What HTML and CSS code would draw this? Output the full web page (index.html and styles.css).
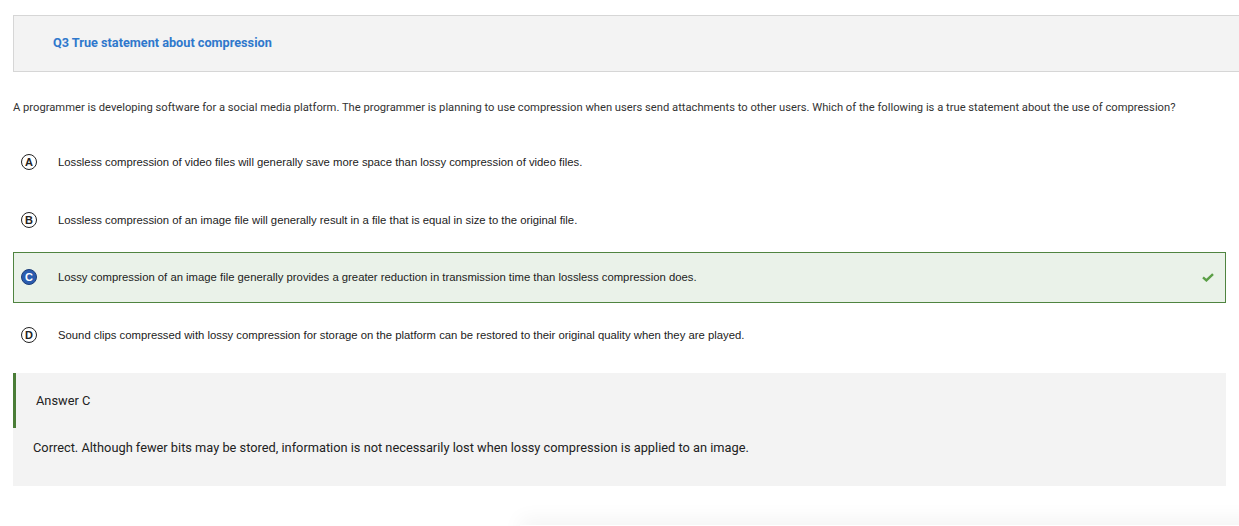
FILE: index.html
```html
<!DOCTYPE html>
<html>
<head>
<meta charset="utf-8">
<link rel="stylesheet" href="styles.css">
</head>
<body>
<div class="page">
  <div class="header"><h1 class="title">Q3 True statement about compression</h1></div>
  <p class="question">A programmer is developing software for a social media platform. The programmer is planning to use compression when users send attachments to other users. Which of the following is a true statement about the use of compression?</p>
  <ul class="options">
    <li class="option"><span class="letter">A</span><span class="opt-text">Lossless compression of video files will generally save more space than lossy compression of video files.</span></li>
    <li class="option"><span class="letter">B</span><span class="opt-text">Lossless compression of an image file will generally result in a file that is equal in size to the original file.</span></li>
    <li class="option correct"><span class="letter">C</span><span class="opt-text">Lossy compression of an image file generally provides a greater reduction in transmission time than lossless compression does.</span>
      <svg class="check" width="12" height="9" viewBox="0 0 12 9"><path d="M1 4.4 L4.4 7.4 L11 1.2" fill="none" stroke="#5b9f46" stroke-width="2.4"/></svg></li>
    <li class="option"><span class="letter">D</span><span class="opt-text">Sound clips compressed with lossy compression for storage on the platform can be restored to their original quality when they are played.</span></li>
  </ul>
  <div class="answer">
    <div class="answer-head">Answer C</div>
    <div class="answer-body">Correct. Although fewer bits may be stored, information is not necessarily lost when lossy compression is applied to an image.</div>
  </div>
  <div class="shadow"></div>
</div>
</body>
</html>
```
FILE: styles.css
```css
html, body { margin: 0; padding: 0; background: #fff; overflow: hidden; }
body { width: 1239px; height: 526px; font-family: Roboto, "Liberation Sans", sans-serif; }
.page { padding: 15px 13px 0 13px; position: relative; height: 511px; }
.header {
  margin-right: -20px;
  height: 55px;
  border: 1px solid #d6d6d6;
  background: #f3f3f3;
  display: flex;
  align-items: center;
  padding-left: 39px;
}
.title { margin: 0 0 2px 0; font-size: 12.7px; font-weight: 700; color: #2f78cc; }
.question { margin: 29px 0 0 0; font-size: 11.2px; line-height: 14px; color: #333; }
.options { list-style: none; margin: 21.5px 0 0 0; padding: 0; }
.option {
  height: 49px;
  margin-bottom: 6.67px;
  display: flex;
  align-items: center;
  padding-left: 7px;
  border: 1px solid transparent;
  font-family: "Liberation Sans", Arial, sans-serif;
  font-size: 11.3px;
  color: #222;
}
.letter {
  width: 14px; height: 14px;
  border: 1.5px solid #222;
  border-radius: 50%;
  display: flex; align-items: center; justify-content: center;
  font-weight: 700; font-size: 11px; color: #222;
  margin-right: 21px;
  flex: none;
}
.opt-text { flex: 1; }
.option.correct { border-color: #4f8440; background: #eaf2e9; }
.option.correct .letter { background: #2a5caf; color: #fff; border-color: #1d3f7a; }
.check { margin-right: 11px; }
.answer { margin-top: 13px; background: #f3f3f3; height: 113px; width: 1213px; }
.answer-head {
  height: 55px;
  border-left: 3px solid #4a7d37;
  display: flex; align-items: center;
  padding-left: 20px;
  font-size: 12.8px; color: #222;
}
.answer-body { padding: 12px 0 0 20px; font-size: 12.8px; color: #222; line-height: 16px; }
.shadow {
  position: absolute; left: 520px; right: -20px; top: 525px; height: 20px;
  box-shadow: 0 -6px 20px rgba(0,0,0,0.05);
}
```
